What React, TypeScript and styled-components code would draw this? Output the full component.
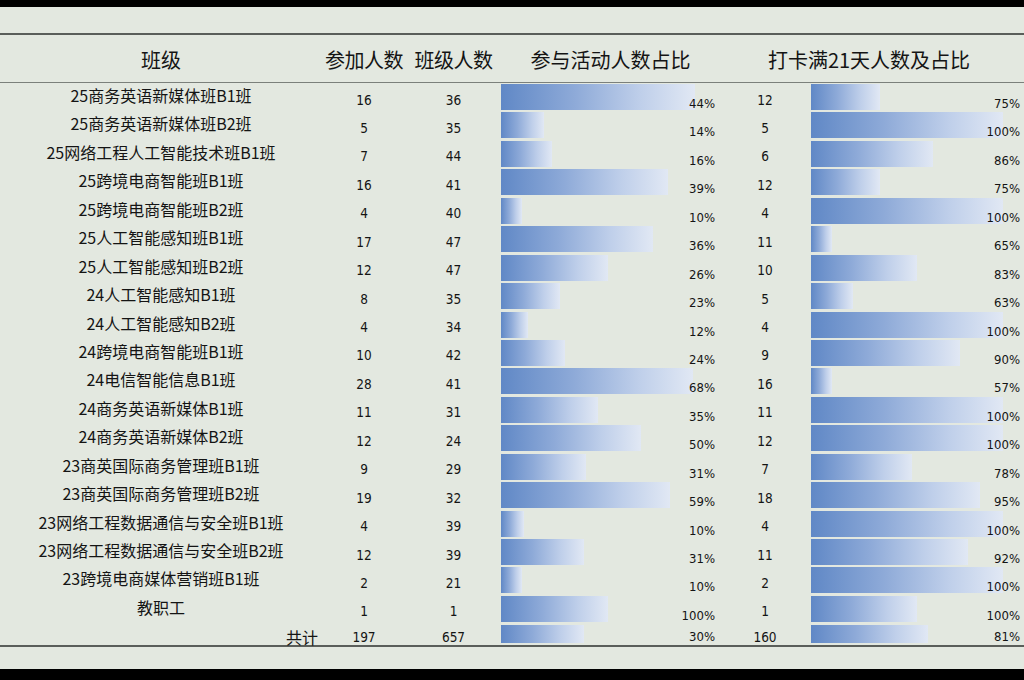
import React from "react";
import styled, { createGlobalStyle } from "styled-components";

const GlobalStyle = createGlobalStyle`
  html, body { margin: 0; padding: 0; background: #000; }
  body { width: 1024px; height: 680px; overflow: hidden; }
  * { box-sizing: border-box; }
`;

const COLS = "322px 84px 95px 219px 90px 214px";

const Frame = styled.div`
  width: 1024px;
  height: 680px;
  background: #000;
  padding-top: 7px;
`;

const Sheet = styled.div`
  height: 662px;
  background: #e3e8e0;
  padding-top: 26px;
  color: #141414;
  font-family: "Noto Sans CJK SC", "Noto Sans", sans-serif;
`;

const Table = styled.div`
  border-top: 2px solid #5a5e5a;
  border-bottom: 2px solid #5a5e5a;
`;

const HeaderRow = styled.div`
  display: grid;
  grid-template-columns: 322px 84px 95px 219px 298px;
  height: 48px;
  border-bottom: 1px solid #7b807b;
  align-items: center;
  font-size: 20px;
  line-height: 24px;
  padding-top: 3px;
`;

const HeadCell = styled.div<{ $tight?: boolean }>`
  text-align: center;
  white-space: nowrap;
  letter-spacing: ${(p) => (p.$tight ? "-0.5px" : "0")};
`;

const Body = styled.div`
  padding-top: 1px;
`;

const Row = styled.div<{ $total?: boolean }>`
  display: grid;
  grid-template-columns: ${COLS};
  height: ${(p) => (p.$total ? "20.6px" : "28.44px")};
  align-items: start;
`;

const LabelCell = styled.div<{ $total?: boolean }>`
  font-size: 16px;
  line-height: 20px;
  white-space: nowrap;
  text-align: ${(p) => (p.$total ? "right" : "center")};
  padding-right: ${(p) => (p.$total ? "4px" : "0")};
  padding-top: ${(p) => (p.$total ? "2.5px" : "1px")};
`;

const NumCell = styled.div<{ $total?: boolean }>`
  font-family: "DejaVu Sans Condensed", "DejaVu Sans", sans-serif;
  font-size: 13.5px;
  line-height: 16px;
  text-align: center;
  padding-top: ${(p) => (p.$total ? "5px" : "7.5px")};
`;

const BarCell = styled.div<{ $pad: number }>`
  display: grid;
  padding-left: ${(p) => p.$pad}px;
`;

const Bar = styled.div<{ $total?: boolean }>`
  grid-area: 1 / 1;
  height: ${(p) => (p.$total ? "18px" : "26px")};
  margin-top: ${(p) => (p.$total ? "1px" : "0")};
  background: linear-gradient(90deg, #6088c6 0%, #8eaad8 38%, #bfcfea 72%, #e1e8f4 100%);
`;

const Pct = styled.div<{ $total?: boolean; $right: number }>`
  grid-area: 1 / 1;
  justify-self: end;
  font-family: "DejaVu Sans Condensed", "DejaVu Sans", sans-serif;
  font-size: 13px;
  line-height: 16px;
  padding-right: ${(p) => p.$right}px;
  padding-top: ${(p) => (p.$total ? "4.5px" : "12px")};
`;

type Rec = [string, number, number, string, number, number, string, number];

const rows: Rec[] = [
  ["25商务英语新媒体班B1班", 16, 36, "44%", 194, 12, "75%", 69],
  ["25商务英语新媒体班B2班", 5, 35, "14%", 43, 5, "100%", 192],
  ["25网络工程人工智能技术班B1班", 7, 44, "16%", 51, 6, "86%", 122],
  ["25跨境电商智能班B1班", 16, 41, "39%", 167, 12, "75%", 69],
  ["25跨境电商智能班B2班", 4, 40, "10%", 21, 4, "100%", 192],
  ["25人工智能感知班B1班", 17, 47, "36%", 152, 11, "65%", 21],
  ["25人工智能感知班B2班", 12, 47, "26%", 107, 10, "83%", 106],
  ["24人工智能感知B1班", 8, 35, "23%", 59, 5, "63%", 42],
  ["24人工智能感知B2班", 4, 34, "12%", 27, 4, "100%", 192],
  ["24跨境电商智能班B1班", 10, 42, "24%", 64, 9, "90%", 149],
  ["24电信智能信息B1班", 28, 41, "68%", 192, 16, "57%", 21],
  ["24商务英语新媒体B1班", 11, 31, "35%", 97, 11, "100%", 192],
  ["24商务英语新媒体B2班", 12, 24, "50%", 140, 12, "100%", 192],
  ["23商英国际商务管理班B1班", 9, 29, "31%", 85, 7, "78%", 101],
  ["23商英国际商务管理班B2班", 19, 32, "59%", 169, 18, "95%", 169],
  ["23网络工程数据通信与安全班B1班", 4, 39, "10%", 23, 4, "100%", 192],
  ["23网络工程数据通信与安全班B2班", 12, 39, "31%", 83, 11, "92%", 157],
  ["23跨境电商媒体营销班B1班", 2, 21, "10%", 21, 2, "100%", 192],
  ["教职工", 1, 1, "100%", 107, 1, "100%", 106],
];

const total: Rec = ["共计", 197, 657, "30%", 83, 160, "81%", 117];

function DataRow({ r, isTotal }: { r: Rec; isTotal?: boolean }) {
  const [label, joined, size, pct1, w1, days, pct2, w2] = r;
  return (
    <Row $total={isTotal}>
      <LabelCell $total={isTotal}>{label}</LabelCell>
      <NumCell $total={isTotal}>{joined}</NumCell>
      <NumCell $total={isTotal}>{size}</NumCell>
      <BarCell $pad={0}>
        <Bar $total={isTotal} style={{ width: w1 }} />
        <Pct $total={isTotal} $right={5}>{pct1}</Pct>
      </BarCell>
      <NumCell $total={isTotal}>{days}</NumCell>
      <BarCell $pad={1}>
        <Bar $total={isTotal} style={{ width: w2 }} />
        <Pct $total={isTotal} $right={4}>{pct2}</Pct>
      </BarCell>
    </Row>
  );
}

export default function App() {
  return (
    <>
      <GlobalStyle />
      <Frame>
        <Sheet>
          <Table>
            <HeaderRow>
              <HeadCell>班级</HeadCell>
              <HeadCell $tight>参加人数</HeadCell>
              <HeadCell $tight>班级人数</HeadCell>
              <HeadCell>参与活动人数占比</HeadCell>
              <HeadCell>打卡满21天人数及占比</HeadCell>
            </HeaderRow>
            <Body>
              {rows.map((r) => (
                <DataRow key={r[0]} r={r} />
              ))}
              <DataRow r={total} isTotal />
            </Body>
          </Table>
        </Sheet>
      </Frame>
    </>
  );
}
